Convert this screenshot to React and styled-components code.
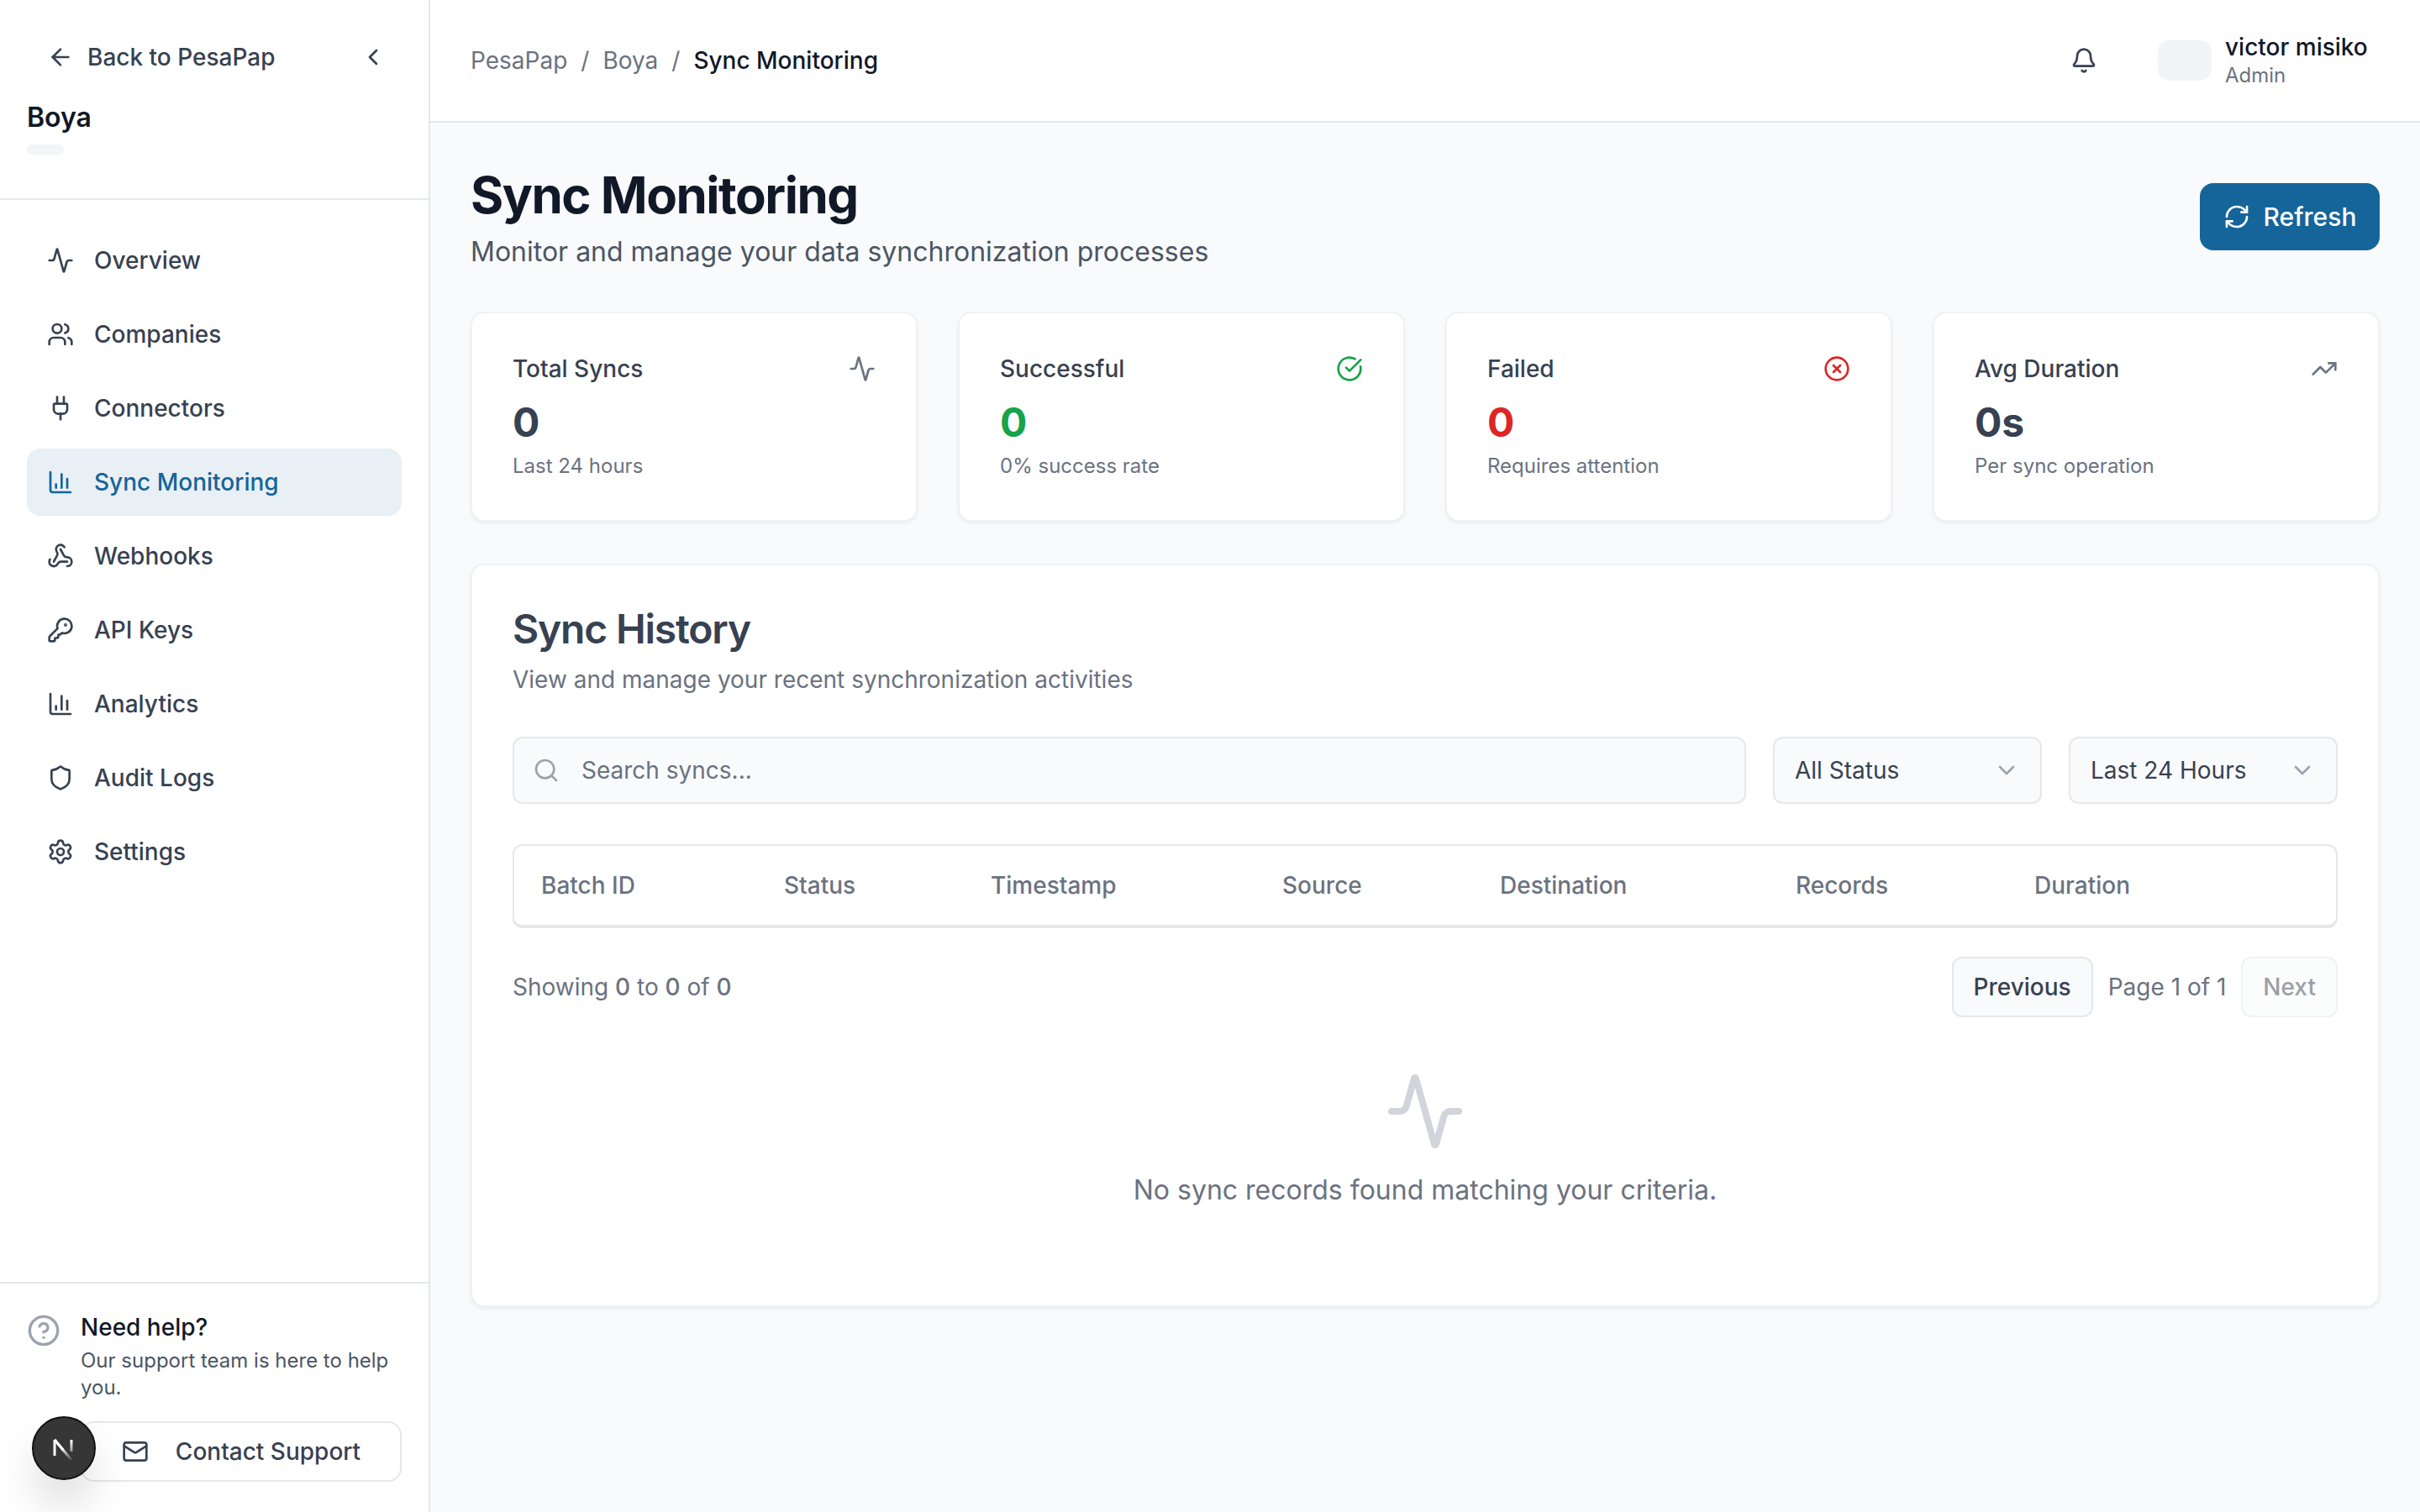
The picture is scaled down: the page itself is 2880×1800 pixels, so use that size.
import React from "react";
import styled, { createGlobalStyle } from "styled-components";
import {
  Activity,
  ArrowLeft,
  Bell,
  ChartColumn,
  ChevronDown,
  ChevronLeft,
  CircleCheckBig,
  CircleHelp,
  CircleX,
  KeyRound,
  Mail,
  Plug,
  RefreshCw,
  Search,
  Settings,
  Shield,
  TrendingUp,
  Users,
  Webhook
} from "lucide-react";

const GlobalStyle = createGlobalStyle`
  * { box-sizing: border-box; }
  html, body { margin: 0; padding: 0; height: 100%; }
  body { font-family: Inter, "Liberation Sans", sans-serif; background: #f9fafb; color: #111827; }
`;

const Shell = styled.div`
  display: flex;
  width: 2880px;
  height: 1800px;
  overflow: hidden;
`;

const Sidebar = styled.aside`
  width: 512px;
  flex: none;
  display: flex;
  flex-direction: column;
  background: #fff;
  border-right: 2px solid #e5e7eb;
`;

const SideTop = styled.div`
  height: 238px;
  padding: 48px 32px 0;
  border-bottom: 2px solid #e5e7eb;
`;

const BackRow = styled.div`
  display: flex;
  align-items: center;
  justify-content: space-between;
  height: 40px;
  padding: 0 18px 0 24px;
  font-size: 28px;
  font-weight: 500;
  color: #374151;
`;

const BackLink = styled.div`
  display: flex;
  align-items: center;
  gap: 16px;
`;

const OrgName = styled.div`
  margin-top: 32px;
  font-size: 32px;
  line-height: 40px;
  font-weight: 600;
  color: #111827;
`;

const OrgPill = styled.div`
  margin-top: 12px;
  width: 44px;
  height: 12px;
  border-radius: 6px;
  background: #f3f4f6;
`;

const Nav = styled.nav`
  flex: 1;
  display: flex;
  flex-direction: column;
  gap: 8px;
  padding: 32px 32px 0;
`;

const NavItem = styled.div`
  display: flex;
  align-items: center;
  gap: 24px;
  height: 80px;
  padding: 0 24px;
  border-radius: 16px;
  font-size: 28px;
  font-weight: 500;
  color: ${p => (p.$active ? "#156499" : "#374151")};
  background: ${p => (p.$active ? "#e8eff5" : "transparent")};
`;

const SideFooter = styled.div`
  height: 274px;
  padding: 32px 32px 0;
  border-top: 2px solid #e5e7eb;
  display: flex;
  gap: 24px;
`;

const HelpIcon = styled.div`
  flex: none;
  width: 40px;
  height: 40px;
  margin-top: 4px;
  color: #9ca3af;
`;

const HelpBody = styled.div`
  flex: 1;
  min-width: 0;
`;

const HelpTitle = styled.div`
  font-size: 28px;
  line-height: 40px;
  font-weight: 500;
  color: #111827;
`;

const HelpText = styled.div`
  margin-top: 4px;
  font-size: 24px;
  line-height: 32px;
  color: #4b5563;
`;

const ContactButton = styled.div`
  margin-top: 24px;
  height: 72px;
  display: flex;
  align-items: center;
  justify-content: center;
  gap: 32px;
  border: 2px solid #e5e7eb;
  border-radius: 16px;
  background: #fff;
  font-size: 28px;
  font-weight: 500;
  color: #374151;
`;

const DevBadge = styled.div`
  position: fixed;
  left: 38px;
  top: 1686px;
  width: 76px;
  height: 76px;
  display: flex;
  align-items: center;
  justify-content: center;
  border-radius: 50%;
  background: #363636;
  border: 2px solid #111;
  box-shadow: 0 32px 48px rgba(0, 0, 0, 0.12);
`;

const Main = styled.div`
  flex: 1;
  min-width: 0;
  display: flex;
  flex-direction: column;
`;

const TopBar = styled.header`
  height: 146px;
  flex: none;
  display: flex;
  align-items: center;
  justify-content: space-between;
  padding: 0 48px;
  background: #fff;
  border-bottom: 2px solid #e5e7eb;
`;

const Crumbs = styled.div`
  display: flex;
  align-items: center;
  gap: 16px;
  font-size: 28px;
  color: #6b7280;
`;

const CrumbCurrent = styled.span`
  font-weight: 500;
  color: #111827;
`;

const TopRight = styled.div`
  display: flex;
  align-items: center;
`;

const BellWrap = styled.div`
  display: flex;
  margin-right: 72px;
  color: #374151;
`;

const Avatar = styled.div`
  width: 64px;
  height: 48px;
  display: flex;
  align-items: center;
  justify-content: center;
  border-radius: 14px;
  background: #f3f4f6;
`;

const UserBlock = styled.div`
  margin-left: 16px;
  width: 184px;
`;

const UserName = styled.div`
  font-size: 28px;
  line-height: 36px;
  font-weight: 500;
  color: #111827;
`;

const UserRole = styled.div`
  font-size: 24px;
  line-height: 32px;
  color: #6b7280;
`;

const Content = styled.main`
  padding: 48px;
  display: flex;
  flex-direction: column;
`;

const PageHead = styled.div`
  display: flex;
  align-items: flex-start;
  justify-content: space-between;
  height: 177px;
`;

const PageTitle = styled.h1`
  margin: 0;
  font-size: 60px;
  line-height: 76px;
  font-weight: 700;
  letter-spacing: -1.5px;
  color: #111827;
`;

const PageSub = styled.p`
  margin: 8px 0 0;
  font-size: 32px;
  line-height: 44px;
  color: #4b5563;
`;

const RefreshButton = styled.div`
  margin-top: 24px;
  width: 214px;
  height: 80px;
  display: flex;
  align-items: center;
  justify-content: center;
  gap: 16px;
  border-radius: 16px;
  background: #15659b;
  color: #fff;
  font-size: 30px;
  font-weight: 500;
`;

const Stats = styled.div`
  display: grid;
  grid-template-columns: repeat(4, 1fr);
  gap: 48px;
`;

const Card = styled.section`
  background: #fff;
  border: 2px solid #f0f1f3;
  border-radius: 16px;
  box-shadow: 0 2px 4px rgba(0, 0, 0, 0.06);
`;

const StatCard = styled(Card)`
  height: 250px;
  padding: 48px;
`;

const StatHead = styled.div`
  display: flex;
  align-items: center;
  justify-content: space-between;
  height: 36px;
  font-size: 28px;
  font-weight: 500;
  color: #374151;
`;

const StatIcon = styled.div`
  display: flex;
  color: ${p => p.$color};
`;

const StatValue = styled.div`
  margin-top: 16px;
  font-size: 48px;
  line-height: 60px;
  font-weight: 700;
  color: ${p => p.$color};
`;

const StatNote = styled.div`
  margin-top: 6px;
  font-size: 24px;
  line-height: 32px;
  color: #6b7280;
`;

const HistoryCard = styled(Card)`
  margin-top: 50px;
  height: 885px;
  padding: 48px;
`;

const HistoryTitle = styled.h2`
  margin: 0;
  font-size: 48px;
  line-height: 56px;
  font-weight: 600;
  letter-spacing: -1.2px;
  color: #374151;
`;

const HistorySub = styled.p`
  margin: 12px 0 0;
  font-size: 28px;
  line-height: 40px;
  color: #6b7280;
`;

const Filters = styled.div`
  margin-top: 48px;
  display: flex;
  gap: 32px;
`;

const SearchBox = styled.div`
  flex: 1;
  height: 80px;
  display: flex;
  align-items: center;
  gap: 26px;
  padding: 0 22px;
  background: #f9fafb;
  border: 2px solid #e5e7eb;
  border-radius: 12px;
  font-size: 28px;
  color: #6b7280;
  svg { color: #9ca3af; flex: none; }
`;

const Select = styled.div`
  width: 320px;
  flex: none;
  height: 80px;
  display: flex;
  align-items: center;
  justify-content: space-between;
  padding: 0 24px;
  background: #f9fafb;
  border: 2px solid #e5e7eb;
  border-radius: 12px;
  font-size: 28px;
  color: #374151;
  svg { color: #9ca3af; }
`;

const TableHead = styled.div`
  margin-top: 48px;
  height: 100px;
  display: grid;
  grid-template-columns: 289px 246px 347px 259px 352px 284px 1fr;
  align-items: center;
  padding-left: 32px;
  border: 2px solid #e5e7eb;
  border-bottom-width: 4px;
  border-radius: 12px;
  font-size: 28px;
  font-weight: 500;
  color: #6b7280;
`;

const Pager = styled.div`
  margin-top: 34px;
  display: flex;
  align-items: center;
  justify-content: space-between;
  font-size: 28px;
  color: #6b7280;
`;

const PagerControls = styled.div`
  display: flex;
  align-items: center;
  gap: 18px;
`;

const Count = styled.span`
  font-weight: 500;
`;

const PageButton = styled.div`
  height: 72px;
  display: flex;
  align-items: center;
  padding: 0 24px;
  background: #f9fafb;
  border: 2px solid #e5e7eb;
  border-radius: 12px;
  font-weight: 500;
  color: #374151;
  opacity: ${p => (p.$disabled ? 0.5 : 1)};
`;

const Empty = styled.div`
  margin-top: 64px;
  display: flex;
  flex-direction: column;
  align-items: center;
  color: #d1d5db;
`;

const EmptyText = styled.p`
  margin: 26px 0 0;
  font-size: 32px;
  line-height: 40px;
  color: #6b7280;
`;

const NAV = [
  ["Overview", Activity],
  ["Companies", Users],
  ["Connectors", Plug],
  ["Sync Monitoring", ChartColumn, true],
  ["Webhooks", Webhook],
  ["API Keys", KeyRound],
  ["Analytics", ChartColumn],
  ["Audit Logs", Shield],
  ["Settings", Settings]
];

const STATS = [
  { label: "Total Syncs", value: "0", note: "Last 24 hours", icon: Activity, iconColor: "#6b7280", color: "#374151" },
  { label: "Successful", value: "0", note: "0% success rate", icon: CircleCheckBig, iconColor: "#16a34a", color: "#16a34a" },
  { label: "Failed", value: "0", note: "Requires attention", icon: CircleX, iconColor: "#dc2626", color: "#dc2626" },
  { label: "Avg Duration", value: "0s", note: "Per sync operation", icon: TrendingUp, iconColor: "#6b7280", color: "#374151" }
];

const COLUMNS = ["Batch ID", "Status", "Timestamp", "Source", "Destination", "Records", "Duration"];

const NextMark = () => (
  <svg width="36" height="36" viewBox="0 0 36 36" fill="none">
    <defs>
      <linearGradient id="nextFade" x1="18" y1="16" x2="30" y2="32" gradientUnits="userSpaceOnUse">
        <stop stopColor="#fff" />
        <stop offset="1" stopColor="#fff" stopOpacity="0" />
      </linearGradient>
    </defs>
    <path d="M6 27V7h3l18 23" stroke="url(#nextFade)" strokeWidth="0" />
    <path d="M7 27V8" stroke="#fff" strokeWidth="3" />
    <path d="M7 8l20 24" stroke="url(#nextFade)" strokeWidth="3" />
    <path d="M7 8l10 12" stroke="#fff" strokeWidth="3" />
    <path d="M27 8v14" stroke="url(#nextFade)" strokeWidth="3" />
  </svg>
);

export default function App() {
  return (
    <>
      <GlobalStyle />
      <Shell>
        <Sidebar>
          <SideTop>
            <BackRow>
              <BackLink>
                <ArrowLeft size={32} strokeWidth={2} />
                Back to PesaPap
              </BackLink>
              <ChevronLeft size={32} strokeWidth={2} />
            </BackRow>
            <OrgName>Boya</OrgName>
            <OrgPill />
          </SideTop>
          <Nav>
            {NAV.map(([label, Icon, active]) => (
              <NavItem key={label} $active={active}>
                <Icon size={32} strokeWidth={2} />
                {label}
              </NavItem>
            ))}
          </Nav>
          <SideFooter>
            <HelpIcon>
              <CircleHelp size={40} strokeWidth={2} />
            </HelpIcon>
            <HelpBody>
              <HelpTitle>Need help?</HelpTitle>
              <HelpText>Our support team is here to help you.</HelpText>
              <ContactButton>
                <Mail size={32} strokeWidth={2} />
                Contact Support
              </ContactButton>
            </HelpBody>
          </SideFooter>
        </Sidebar>
        <Main>
          <TopBar>
            <Crumbs>
              <span>PesaPap</span>
              <span>/</span>
              <span>Boya</span>
              <span>/</span>
              <CrumbCurrent>Sync Monitoring</CrumbCurrent>
            </Crumbs>
            <TopRight>
              <BellWrap>
                <Bell size={32} strokeWidth={2} />
              </BellWrap>
              <Avatar />
              <UserBlock>
                <UserName>victor misiko</UserName>
                <UserRole>Admin</UserRole>
              </UserBlock>
            </TopRight>
          </TopBar>
          <Content>
            <PageHead>
              <div>
                <PageTitle>Sync Monitoring</PageTitle>
                <PageSub>Monitor and manage your data synchronization processes</PageSub>
              </div>
              <RefreshButton>
                <RefreshCw size={32} strokeWidth={2} />
                Refresh
              </RefreshButton>
            </PageHead>
            <Stats>
              {STATS.map(({ label, value, note, icon: Icon, iconColor, color }) => (
                <StatCard key={label}>
                  <StatHead>
                    {label}
                    <StatIcon $color={iconColor}>
                      <Icon size={32} strokeWidth={2} />
                    </StatIcon>
                  </StatHead>
                  <StatValue $color={color}>{value}</StatValue>
                  <StatNote>{note}</StatNote>
                </StatCard>
              ))}
            </Stats>
            <HistoryCard>
              <HistoryTitle>Sync History</HistoryTitle>
              <HistorySub>View and manage your recent synchronization activities</HistorySub>
              <Filters>
                <SearchBox>
                  <Search size={32} strokeWidth={2} />
                  Search syncs...
                </SearchBox>
                <Select>
                  All Status
                  <ChevronDown size={32} strokeWidth={2} />
                </Select>
                <Select>
                  Last 24 Hours
                  <ChevronDown size={32} strokeWidth={2} />
                </Select>
              </Filters>
              <TableHead>
                {COLUMNS.map(c => (
                  <span key={c}>{c}</span>
                ))}
              </TableHead>
              <Pager>
                <span>
                  Showing <Count>0</Count> to <Count>0</Count> of <Count>0</Count>
                </span>
                <PagerControls>
                  <PageButton>Previous</PageButton>
                  <span>Page 1 of 1</span>
                  <PageButton $disabled>Next</PageButton>
                </PagerControls>
              </Pager>
              <Empty>
                <Activity size={96} strokeWidth={2} />
                <EmptyText>No sync records found matching your criteria.</EmptyText>
              </Empty>
            </HistoryCard>
          </Content>
        </Main>
      </Shell>
      <DevBadge>
        <NextMark />
      </DevBadge>
    </>
  );
}
